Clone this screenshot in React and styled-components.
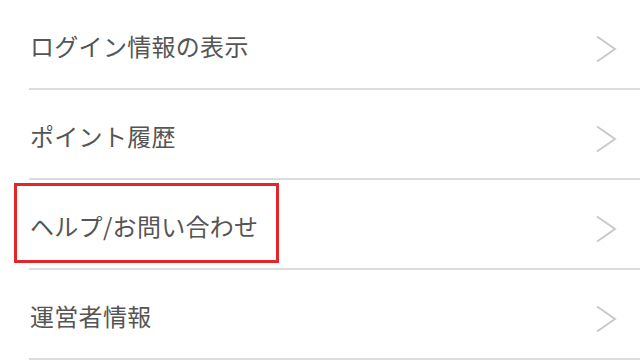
import React from 'react';
import styled, { createGlobalStyle } from 'styled-components';

const GlobalStyle = createGlobalStyle`
  html, body {
    margin: 0;
    padding: 0;
    background: #ffffff;
  }
  body {
    font-family: 'Noto Sans CJK JP', 'Noto Sans', sans-serif;
  }
`;

const Menu = styled.ul`
  list-style: none;
  margin: 0;
  padding: 0;
  width: 640px;
  height: 360px;
  overflow: hidden;
`;

const Row = styled.li`
  position: relative;
  box-sizing: border-box;
  height: 90px;
  margin-left: 29px;
  padding: 4px 23px 0 1px;
  border-bottom: 2px solid #dcdcdc;
  display: flex;
  align-items: center;
  justify-content: space-between;
`;

const Label = styled.span`
  font-size: 24px;
  letter-spacing: 0.3px;
  color: #555555;
  line-height: 1;
`;

const Chevron = styled.svg`
  width: 22px;
  height: 28px;
  margin-top: 6px;
  flex-shrink: 0;
`;

const Highlight = styled.div`
  position: absolute;
  left: -15px;
  top: 3px;
  width: 265px;
  height: 80px;
  box-sizing: border-box;
  border: 3px solid #e3262a;
  pointer-events: none;
`;

const items = [
  { label: 'ログイン情報の表示' },
  { label: 'ポイント履歴' },
  { label: 'ヘルプ/お問い合わせ', marked: true },
  { label: '運営者情報' },
];

const Arrow = () => (
  <Chevron viewBox="0 0 22 28">
    <polyline
      points="2,1.5 20,14 2,26.5"
      fill="none"
      stroke="#c9c9c9"
      strokeWidth="2"
      strokeLinejoin="miter"
    />
  </Chevron>
);

export default function App() {
  return (
    <>
      <GlobalStyle />
      <Menu>
        {items.map(item => (
          <Row key={item.label}>
            <Label>{item.label}</Label>
            <Arrow />
            {item.marked && <Highlight />}
          </Row>
        ))}
      </Menu>
    </>
  );
}
